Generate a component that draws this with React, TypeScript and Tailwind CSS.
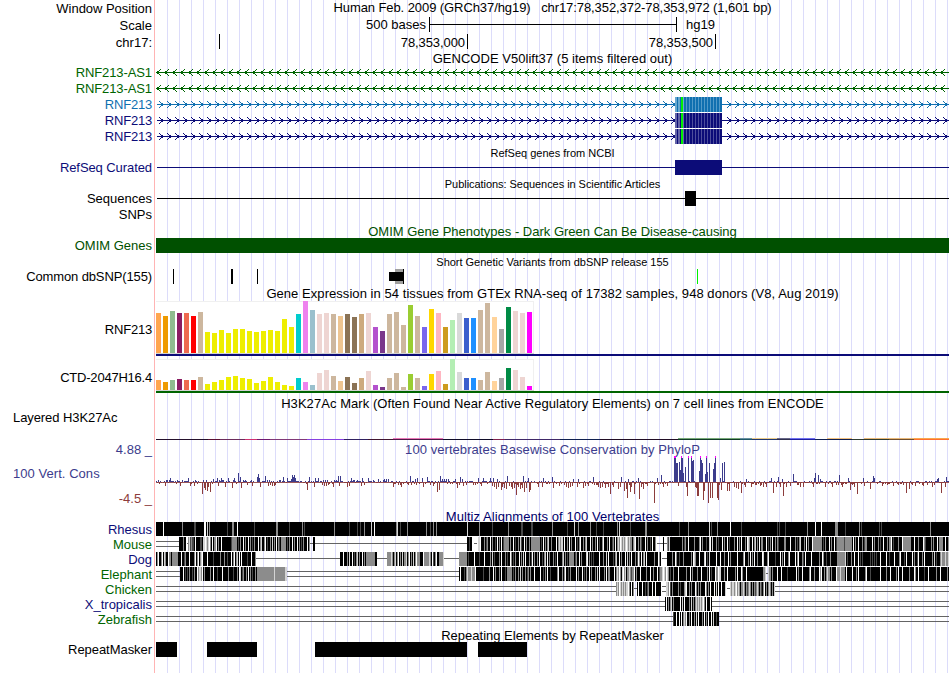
import type { ReactNode } from 'react';

// Genome x coordinates are in image pixels, the data column starts at ORIGIN
const ORIGIN = 156;
const END = 949;
const WIDTH = END - ORIGIN;

const NAVY = '#0c0c78';
const GREEN = '#006400';
const BLUE = '#1070b0';

function Row({ label, height, labelClass = '', children }: {
  label?: ReactNode;
  height: string;
  labelClass?: string;
  children?: ReactNode;
}) {
  return (
    <div className={`flex ${height}`}>
      <div className={`w-[155px] shrink-0 border-r border-[#ffb4b4] pr-[2px] text-right whitespace-nowrap leading-4 ${labelClass}`}>
        {label}
      </div>
      <div className="ml-px w-[793px] shrink-0 bg-[repeating-linear-gradient(90deg,transparent_0_11px,#dcdcfa_11px_12px)]">
        {children}
      </div>
    </div>
  );
}

function Title({ children, className = '' }: { children: ReactNode; className?: string }) {
  return <div className={`text-center whitespace-pre ${className}`}>{children}</div>;
}

function Plot({ height, children }: { height: number; children: ReactNode }) {
  return (
    <svg
      className="block overflow-visible"
      width={WIDTH}
      height={height}
      viewBox={`${ORIGIN} 0 ${WIDTH} ${height}`}
      shapeRendering="crispEdges"
    >
      {children}
    </svg>
  );
}

/* ---------- genes ---------- */

function arrows(dir: 'left' | 'right', skip?: [number, number]) {
  let d = '';
  const first = dir === 'left' ? 157 : 162;
  const step = dir === 'left' ? 1 : -1;
  for (let tip = first; tip < END; tip += 8) {
    if (skip && tip > skip[0] && tip < skip[1] + 3) continue;
    for (let i = 1; i <= 3; i++) {
      const x = tip + i * step;
      if (x >= END) continue;
      d += `M${x} ${7 - i}h1v1h-1zM${x} ${7 + i}h1v1h-1z`;
    }
    // solid point where the arms meet the line
    d += `M${tip} 6h1v3h-1z`;
  }
  return d;
}

function Intron({ color }: { color: string }) {
  return (
    <Plot height={15}>
      <rect x={156} y={7} width={793} height={1} fill={color} />
      <path d={arrows('left')} fill={color} />
    </Plot>
  );
}

function Gene({ color, light }: { color: string; light: string }) {
  const codons = [];
  for (let x = 686; x < 722; x += 3) codons.push(x);
  return (
    <Plot height={15}>
      <rect x={157} y={7} width={792} height={1} fill={color} />
      <path d={arrows('right', [674, 722])} fill={color} />
      <rect x={675} y={0} width={47} height={15} fill={color} />
      <rect x={675} y={0} width={2} height={15} fill={light} />
      <rect x={678} y={0} width={2} height={15} fill={light} />
      <rect x={681} y={0} width={2} height={15} fill="#00f000" />
      <rect x={683} y={0} width={1} height={15} fill={light} />
      {codons.map(x => <rect key={x} x={x} y={0} width={1} height={15} fill={light} opacity={0.75} />)}
    </Plot>
  );
}

/* ---------- GTEx ---------- */

const TISSUES = [
  '#ffa54f', '#ee9a00', '#8fbc8f', '#8b1c62', '#ee6a50', '#ff0000', '#cdb79e',
  '#eeee00', '#eeee00', '#eeee00', '#eeee00', '#eeee00', '#eeee00', '#eeee00',
  '#eeee00', '#eeee00', '#eeee00', '#eeee00', '#eeee00', '#eeee00',
  '#00cdcd', '#ee82ee', '#9ac0cd', '#eed5d2', '#eed5d2', '#cdb79e', '#eec591',
  '#8b7355', '#8b7355', '#cdaa7d', '#eed5d2', '#b452cd', '#7a378b',
  '#cdb79e', '#cdb79e', '#cdb79e', '#9acd32', '#cdb79e', '#7a67ee', '#ffd700',
  '#ffb6c1', '#cd9b1d', '#b4eeb4', '#d9d9d9', '#3a5fcd', '#1e90ff',
  '#cdb79e', '#cdb79e', '#ffd39b', '#a6a6a6', '#008b45', '#eed5d2', '#eed5d2', '#ff00ff',
];

const RNF213 = [
  40, 37, 42, 40, 40, 37, 41, 21, 20, 23, 20, 24, 24, 22, 21, 22, 23, 22, 34, 26, 39, 52, 43, 39, 40, 39, 37,
  39, 36, 39, 40, 26, 22, 39, 41, 28, 48, 37, 26, 44, 40, 26, 33, 40, 35, 35, 43, 50, 36, 24, 46, 42, 40, 41,
];

const CTD2047 = [
  10, 8, 10, 11, 10, 10, 13, 6, 8, 10, 13, 14, 12, 11, 7, 9, 13, 8, 5, 4, 12, 8, 5, 17, 20, 14, 9,
  13, 7, 12, 19, 5, 3, 12, 17, 3, 16, 12, 4, 16, 19, 6, 31, 18, 12, 12, 10, 18, 9, 12, 22, 20, 13, 4,
];

function Expression({ values, max, line }: { values: number[]; max: number; line: string }) {
  return (
    <Plot height={max + 3}>
      <rect x={156} y={0} width={378} height={max + 1} fill="#f0f0f0" />
      <rect x={156} y={1} width={377} height={max - 1} fill="#ffffff" />
      <rect x={156} y={max} width={378} height={1} fill="#d3d3d3" />
      {values.map((v, i) => (
        <rect key={i} x={156 + i * 7} y={max - v} width={5} height={v} fill={TISSUES[i]} />
      ))}
      <rect x={156} y={max + 1} width={793} height={2} fill={line} />
    </Plot>
  );
}

/* ---------- H3K27Ac ---------- */

const H3K27AC: [number, number, string][] = [
  [156, 208, '#24102c'], [208, 220, '#5a1034'], [220, 245, '#6c2c5c'], [245, 257, '#d03070'],
  [257, 270, '#701870'], [270, 307, '#803878'], [307, 344, '#8840e0'], [344, 368, '#302060'],
  [368, 393, '#401430'], [393, 443, '#501848'], [443, 493, '#100c28'], [493, 505, '#802050'],
  [505, 560, '#402868'], [560, 600, '#102050'], [600, 678, '#200c24'], [678, 740, '#103c28'],
  [740, 752, '#205868'], [752, 777, '#203870'], [777, 790, '#303050'], [790, 815, '#2020a0'],
  [815, 852, '#102050'], [852, 889, '#303c30'], [889, 914, '#705030'], [914, 949, '#ff7030'],
];

const H3K27AC_TOP: [number, number, string][] = [
  [393, 443, '#e878b8'], [678, 740, '#78a878'], [740, 752, '#6890a0'], [752, 777, '#e8c888'],
  [777, 790, '#686888'], [790, 815, '#7070f0'], [827, 852, '#f0c080'], [864, 914, '#e8b878'], [914, 949, '#f8a850'],
];

/* ---------- PhyloP ---------- */

const UP: [number, number][] = [
  [170, 4], [188, 4], [213, 3], [217, 4], [221, 4], [228, 4], [234, 4], [238, 9], [240, 5], [243, 2], [257, 5],
  [258, 8], [259, 4], [265, 6], [283, 5], [287, 4], [291, 3], [292, 7], [293, 5], [294, 7], [295, 4], [309, 5],
  [315, 4], [318, 4], [338, 6], [340, 6], [351, 4], [362, 4], [368, 4], [378, 3], [384, 3], [386, 3], [388, 3],
  [410, 6], [415, 3], [417, 4], [422, 4], [427, 5], [440, 6], [442, 3], [444, 3], [446, 3], [448, 3], [455, 3],
  [460, 5], [462, 3], [478, 4], [483, 4], [490, 4], [493, 4], [497, 3], [507, 6], [523, 6], [528, 4], [543, 4],
  [552, 5], [573, 3], [578, 3], [593, 5], [621, 5], [628, 3], [638, 4], [657, 4], [661, 7], [674, 26], [675, 26],
  [676, 19], [677, 19], [679, 20], [680, 12], [681, 26], [682, 24], [683, 9], [685, 15], [688, 26], [691, 26],
  [692, 21], [693, 22], [699, 11], [700, 26], [701, 22], [702, 19], [705, 8], [706, 26], [707, 10], [709, 19],
  [713, 13], [714, 19], [715, 26], [720, 4], [722, 19], [724, 20], [746, 3], [771, 4], [778, 5], [782, 3],
  [793, 8], [814, 4], [815, 9], [818, 7], [820, 3], [839, 7], [848, 4], [863, 4], [873, 6], [874, 4], [937, 3],
  [938, 4], [946, 5],
];

const DOWN: [number, number][] = [
  [159, 2], [165, 4], [180, 4], [190, 4], [194, 4], [202, 12], [204, 6], [205, 8], [207, 9], [208, 5], [210, 10],
  [218, 4], [225, 5], [232, 6], [241, 6], [247, 3], [252, 4], [260, 5], [268, 4], [270, 3], [272, 4], [274, 4],
  [275, 3], [307, 8], [314, 5], [322, 3], [324, 4], [326, 4], [328, 3], [333, 5], [339, 4], [347, 5], [349, 4],
  [361, 4], [364, 3], [393, 5], [398, 3], [401, 5], [423, 5], [430, 3], [433, 4], [437, 10], [439, 8], [444, 4],
  [457, 6], [463, 4], [473, 3], [481, 4], [492, 4], [494, 5], [496, 7], [498, 5], [501, 8], [502, 5], [504, 6],
  [506, 7], [509, 4], [511, 5], [512, 7], [514, 6], [516, 13], [518, 5], [520, 7], [522, 6], [524, 10], [526, 6],
  [529, 10], [530, 8], [538, 5], [542, 5], [553, 6], [559, 4], [566, 5], [568, 6], [570, 5], [572, 4], [577, 5],
  [583, 6], [585, 4], [588, 4], [598, 5], [600, 6], [602, 5], [605, 6], [608, 5], [610, 12], [613, 5], [618, 7],
  [620, 5], [624, 9], [626, 7], [627, 16], [630, 10], [631, 5], [634, 12], [639, 17], [641, 5], [643, 7],
  [647, 4], [654, 21], [663, 5], [667, 4], [678, 4], [686, 5], [687, 14], [695, 5], [696, 6], [697, 14],
  [698, 14], [703, 18], [704, 9], [708, 21], [710, 16], [712, 16], [717, 16], [718, 18], [721, 8], [727, 9],
  [729, 9], [734, 5], [736, 6], [738, 7], [741, 11], [745, 5], [751, 5], [760, 4], [763, 5], [766, 5], [773, 11],
  [776, 5], [780, 5], [783, 14], [786, 5], [790, 4], [800, 5], [803, 5], [813, 5], [825, 5], [832, 5], [842, 5],
  [850, 8], [854, 5], [857, 12], [864, 4], [870, 7], [882, 4], [893, 4], [906, 11], [909, 7], [915, 4], [923, 4],
  [932, 5], [941, 11], [945, 5],
];

// low-amplitude scores between the named peaks
function background(x: number) {
  const n = Math.abs(Math.sin(x * 12.9898) * 43758.5453) % 1;
  if (x < 400) return n < 0.4 ? 1 : n < 0.6 ? -1 : n < 0.75 ? 2 : n < 0.82 ? -2 : 0;
  return n < 0.34 ? 1 : n < 0.6 ? -1 : n < 0.8 ? -2 : n < 0.9 ? -3 : 0;
}

function Conservation() {
  const scores = new Map<number, number>();
  for (let x = ORIGIN; x < END; x++) scores.set(x, background(x));
  DOWN.forEach(([x, v]) => scores.set(x, -v));
  UP.forEach(([x, v]) => scores.set(x, v));

  let up = '';
  let down = '';
  scores.forEach((v, x) => {
    if (v > 0) up += `M${x} ${24 - v}h1v${v}h-1z`;
    if (v < 0) down += `M${x} 24h1v${-v}h-1z`;
  });
  return (
    <Plot height={50}>
      <rect x={156} y={24} width={793} height={1} fill="#8c3c3c" opacity={0.85} />
      <path d={up} fill="#3c3c8c" />
      <path d={down} fill="#8c3c3c" />
      {UP.filter(([, v]) => v === 26).map(([x]) => (
        <rect key={x} x={x} y={-2} width={x === 674 ? 2 : 1} height={2} fill="#ff00ff" />
      ))}
    </Plot>
  );
}

/* ---------- Multiz ---------- */

const SHADES: Record<string, string> = {
  k: '#000000', d: '#484848', g: '#8c8c8c', s: '#d4d4d4', w: '#ffffff',
};

// start, end, run-length shades (letter, then an optional pixel count)
type Block = [number, number, string];

type Species = {
  name: string;
  color: string;
  double?: [number, number][];
  single?: [number, number][];
  blocks: Block[];
};

const RHESUS_MARKS: [number, string][] = [
  [163, 'w'], [182, 'g'], [194, 'd2'], [204, 'w2'], [207, 's'], [209, 'g'], [227, 'd'], [232, 'g2'], [237, 'w'],
  [254, 'd'], [276, 'g2'], [289, 'd'], [302, 'g'], [304, 'd'], [334, 'g'], [349, 'd'], [357, 'd'], [360, 'd'],
  [364, 'g'], [371, 's'], [374, 'w'], [396, 'gs'], [400, 'd'], [407, 'g'], [426, 'g'], [430, 'd'], [433, 'g'],
  [436, 'g'], [467, 's'], [479, 'g'], [492, 'd'], [508, 'g'], [521, 'd2'], [531, 'd2'], [552, 'g'], [567, 'd'],
  [574, 's'], [578, 'g'], [590, 'g'], [596, 'd'], [603, 'd'], [617, 'g'], [619, 's'], [630, 'd'], [645, 'g2'],
  [679, 'd'], [688, 'g'], [709, 's'], [711, 'd'], [717, 'g'], [730, 'w'], [741, 'd'], [777, 'd'], [779, 'd'],
  [785, 'd'], [807, 'g'], [815, 'w'], [821, 'w'], [835, 'g3'], [845, 'd'], [859, 'g'], [861, 'd'], [879, 'd'],
  [881, 'd'], [930, 'g'],
];

function marks([x, pattern]: [number, string]): Block {
  return [x, x + (pattern === 'gs' ? 2 : Number(pattern.slice(1) || 1)), pattern];
}

const SPECIES: Species[] = [
  { name: 'Rhesus', color: '#0c0c78', blocks: [[156, 949, 'k793'], ...RHESUS_MARKS.map(marks)] },
  {
    name: 'Mouse',
    color: '#006400',
    double: [[156, 179]],
    single: [[187, 188], [310, 313], [315, 467], [474, 477], [657, 667]],
    blocks: [
      [179, 187, 'k4gk2w'],
      [188, 232, 'gsdgd2kwk4d2ks2wsgswgkwkg2wkgk2wk9dkgkg2'],
      [232, 310, 'g5kdkgk2wkgk2wkgkdkgk3wkgsk2gwkdk2gkskgkwkgdk'],
      [313, 315, 'k2'],
      [467, 474, 'k2dk2w2'],
      [477, 504, 'ws2wk3gkdgk2wkgk2dkwkgkwkdg'],
      [504, 530, 'g5kgk2wkdk2gksdk2wkgk2g'],
      [530, 541, 'kg9k'],
      [541, 617, 'dkwkgkgsk2gk4wkgsgs2kwk2gkwkgk3wkdkgwk2gkgsk3wkgk2gkwkdk2gwk3gkwk2dgkwk2'],
      [617, 632, 'gsgwsgsgswsgsg'],
      [632, 657, 'kgswk2gkgdk3wkgk2dkwk2gwk'],
      [663, 664, 'k'],
      [667, 682, 'gdsk12'],
      [682, 813, 'gkdgk2wk5gk4gwkgk3dk2swksk3gkdk3wkgk2wkdk4gk2wkgkwk3gkwsgk2wkgskgkwkg2k3wkdkgkwk2gkgdk5g2k4wk4gkdkgsk3gkwkgk3wkdk'],
      [813, 822, 'g9'],
      [822, 837, 'kdkgk3wkgk2wkd'],
      [837, 852, 'g7dg7'],
      [852, 903, 'kwkgk2wk3gkdg2k5wkgk3gkdk2wk3gkg2wkdk4gk2'],
      [903, 911, 'g8'],
      [911, 949, 'k3wk3gk4wgdk5gkgk3wkg4k2wk2g'],
    ],
  },
  {
    name: 'Dog',
    color: '#0c0c78',
    single: [[256, 340], [377, 387], [444, 459], [662, 667]],
    blocks: [
      [156, 256, 'kgwk2gwksgk2wg2kg6k3wk2dgk3wk4gwkgwkgswk4wk5dk6gk3gk2dk3wkgwkgskwkwk5dk3wk2'],
      [340, 377, 'k3wk3gksk2wkdkgskgk2wkgkg9'],
      [387, 444, 'g4sgkgskgwkgkskg2skgwkgkskgwg3k3wg5sgkwdkgwk2'],
      [459, 662, 'g8kdk5wk4dk4wk5gkskdk4gkwk3gkdk2wgkdkgk3wkgkskwk3gkdwkgk2gkwk2dkgskwkgk3gkdkwk4gskgkdkg5kdgk2wkgk4swkgkdkdk5wk3gk2skwk4dkgsk2wkgk3wkskgkwk3gkdwgkwkgskwk7gk3wgkwkdk7wk4gs'],
      [667, 837, 'k5gk2wgk2dk3gk7gkwsgk3wk4swkdksk6wk3wk3gk3wkgk6wk5gwk3gkwkgkwk2gk4wsk3gwk6dk4wkgkwk3gwk5wkgwk3gdkwk5wkk'],
      [837, 845, 'g8'],
      [845, 941, 'skdk3gk2wk3wkdkdk7dkdkdkdk3wk5wk2dk4wk4gwk3dkwk5wkgk2dwk3gkwk7gk'],
      [941, 949, 'sg3sg2s'],
    ],
  },
  {
    name: 'Elephant',
    color: '#006400',
    double: [[156, 180], [287, 459]],
    single: [[766, 768]],
    blocks: [
      [180, 257, 'k3wkdkdkgk2dkgk2wgs2gwkgk5gk2wk3dk4wk5gk4dk3gkwskdgk2gkwkgkdk2gkd'],
      [257, 274, 'g17'],
      [274, 287, 'sg10s2'],
      [459, 573, 'kwk3dkgsg2gsg3wk7dk5gk3wkgk3gkwk3dkg4gkdkgk2gkskgk2gkdgkgk3wk5wk2dkgkwk2dk6gwk3gkgwk2dkgk3wk2g2kgk2wk3gkdk'],
      [573, 617, 'k3wkgk3wkdkgk2wkgk3gkskwk4gkwkg2k'],
      [617, 633, 'sgwgkswgskg2sgdgs'],
      [633, 661, 'gwkgk3wk5gk3wk2gk3wkd'],
      [661, 669, 'gswsgwsg'],
      [669, 747, 'kdk2gk4wk7gk3wkgk4gk3wk5gkwkdk3wg2ws2k3gk2wk7gkwk3wgk3wkgk2sgwgk'],
      [747, 763, 'k16'],
      [763, 766, 'g2s'],
      [768, 837, 'sg2kgk4wk3wk5dk8wkgk3wk6gwk3gk4wgwk2gkg'],
      [837, 845, 'g3sg4'],
      [845, 949, 'kwk5wk3gkwk6gwk3dk9wk5gk3wk5gkwk3wk6gk4wgk2wk5dk3wk7gk3wk6gk'],
    ],
  },
  {
    name: 'Chicken',
    color: '#006400',
    double: [[156, 616], [662, 666], [775, 949]],
    single: [[634, 637], [727, 730]],
    blocks: [
      [616, 634, 'gsgwsgsgsgs2wgkwk'],
      [637, 661, 'kwk3wk2dkdgk3wk2wk5'],
      [666, 726, 's2gwdkgk5gkdk3gswk2gkgk3wgkgkgk4wgkgkwk3wkskwk2wk3'],
      [730, 775, 'sgs2gswgsgkg2sgkgdgsgkgkgdgsgkgdkgwkgkgsgkgk'],
    ],
  },
  {
    name: 'X_tropicalis',
    color: '#0c0c78',
    double: [[156, 665], [712, 949]],
    blocks: [[665, 712, 'kwkgkgskgk6wkskwk4gkskgkgsgsgsgswgkwk3wk4']],
  },
  {
    name: 'Zebrafish',
    color: '#006400',
    double: [[156, 673], [719, 949]],
    blocks: [[673, 719, 'dk2wk2wkwkgsgwk2gkwk2gkskwk3gkwkgkwk2wkskk']],
  },
];

// expands a block, repeating its pattern up to the block's end
function runs([start, end, pattern]: Block) {
  const tokens = [...pattern.matchAll(/([kdgsw])(\d*)/g)];
  const out: { x: number; width: number; fill: string }[] = [];
  let x = start;
  for (let i = 0; x < end; i = (i + 1) % tokens.length) {
    const [, shade, count] = tokens[i];
    const width = Math.min(Number(count || 1), end - x);
    out.push({ x, width, fill: SHADES[shade] });
    x += width;
  }
  return out;
}

function Alignment({ species }: { species: Species }) {
  return (
    <Plot height={14}>
      {species.double?.map(([a, b]) => (
        <path key={a} d={`M${a} 4h${b - a}v1h${a - b}zM${a} 9h${b - a}v1h${a - b}z`} fill="#646464" />
      ))}
      {species.single?.map(([a, b]) => (
        <rect key={a} x={a} y={6} width={b - a} height={1} fill="#646464" />
      ))}
      {species.blocks.flatMap(runs).map((r, i) => (
        <rect key={i} x={r.x} y={0} width={r.width} height={14} fill={r.fill} />
      ))}
    </Plot>
  );
}

export default function App() {
  return (
    <div className="h-[673px] w-[950px] overflow-hidden bg-white font-['Liberation_Sans',Arial,sans-serif] text-[13px] text-black">
      <Row height="h-[17px]" label="Window Position" labelClass="pt-px tracking-[-0.03px]">
        <Title className="leading-4 tracking-[-0.08px]">{'Human Feb. 2009 (GRCh37/hg19)   chr17:78,352,372-78,353,972 (1,601 bp)'}</Title>
      </Row>
      <Row height="h-[17px]" label="Scale" labelClass="pt-px">
        <Plot height={17}>
          <text x={426} y={12} textAnchor="end">500 bases</text>
          <path d="M429 0h1v7h246v-7h1v15h-1v-7h-246v7h-1z" fill="#000" />
          <text x={686} y={12}>hg19</text>
        </Plot>
      </Row>
      <Row height="h-[16px]" label="chr17:" labelClass="pt-px">
        <Plot height={16}>
          <rect x={219} y={0} width={1} height={15} />
          <text x={465} y={13} textAnchor="end" className="tracking-[-0.08px]">78,353,000</text>
          <rect x={467} y={0} width={1} height={15} />
          <text x={713} y={13} textAnchor="end" className="tracking-[-0.08px]">78,353,500</text>
          <rect x={715} y={0} width={1} height={15} />
        </Plot>
      </Row>
      <Row height="h-[15px]">
        <Title className="leading-[18px] tracking-[0.03px]">GENCODE V50lift37 (5 items filtered out)</Title>
      </Row>

      <Row height="h-[16px]" label="RNF213-AS1" labelClass="tracking-[-0.1px] text-[#006400]">
        <Intron color={GREEN} />
      </Row>
      <Row height="h-[16px]" label="RNF213-AS1" labelClass="tracking-[-0.1px] text-[#006400]">
        <Intron color={GREEN} />
      </Row>
      <Row height="h-[16px]" label="RNF213" labelClass="tracking-[-0.2px] text-[#1070b0]">
        <Gene color={BLUE} light="#68a8d0" />
      </Row>
      <Row height="h-[16px]" label="RNF213" labelClass="tracking-[-0.2px] text-[#0c0c78]">
        <Gene color={NAVY} light="#6464a8" />
      </Row>
      <Row height="h-[16px]" label="RNF213" labelClass="tracking-[-0.2px] text-[#0c0c78]">
        <Gene color={NAVY} light="#6464a8" />
      </Row>

      <Row height="h-[15px]">
        <Title className="text-[11px] leading-4">RefSeq genes from NCBI</Title>
      </Row>
      <Row height="h-[16px]" label="RefSeq Curated" labelClass="tracking-[-0.08px] text-[#0c0c78]">
        <Plot height={15}>
          <rect x={157} y={7} width={792} height={1} fill={NAVY} />
          <rect x={675} y={0} width={47} height={15} fill={NAVY} />
        </Plot>
      </Row>
      <Row height="h-[15px]">
        <Title className="text-[11px] leading-4 tracking-[-0.05px]">Publications: Sequences in Scientific Articles</Title>
      </Row>
      <Row height="h-[16px]" label="Sequences">
        <Plot height={15}>
          <rect x={157} y={7} width={792} height={1} />
          <rect x={685} y={0} width={11} height={15} />
        </Plot>
      </Row>
      <Row height="h-[16px]" label="SNPs" />
      <Row height="h-[15px]">
        <Title className="leading-[18px] text-[#005000]">OMIM Gene Phenotypes - Dark Green Can Be Disease-causing</Title>
      </Row>
      <Row height="h-[16px]" label="OMIM Genes" labelClass="text-[#005000]">
        <div className="h-[15px] bg-[#005000]" />
      </Row>
      <Row height="h-[15px]">
        <Title className="text-[11px] leading-4 tracking-[-0.02px]">Short Genetic Variants from dbSNP release 155</Title>
      </Row>
      <Row height="h-[16px]" label="Common dbSNP(155)" labelClass="tracking-[-0.12px]">
        <Plot height={15}>
          <rect x={173} y={0} width={1} height={15} />
          <rect x={231} y={0} width={2} height={15} />
          <rect x={257} y={0} width={1} height={15} />
          <rect x={395} y={0} width={8} height={15} fill="#a0a0a0" />
          <rect x={389} y={3} width={14} height={9} />
          <rect x={403} y={0} width={1} height={15} />
          <rect x={697} y={0} width={1} height={15} fill="#00f000" />
        </Plot>
      </Row>

      <Row height="h-[16px]">
        <Title className="leading-[18px] tracking-[0.055px]">Gene Expression in 54 tissues from GTEx RNA-seq of 17382 samples, 948 donors (V8, Aug 2019)</Title>
      </Row>
      <Row height="h-[58px]" label="RNF213" labelClass="pt-[21px] tracking-[-0.2px]">
        <Expression values={RNF213} max={52} line={NAVY} />
      </Row>
      <Row height="h-[37px]" label="CTD-2047H16.4" labelClass="pt-[11px] tracking-[-0.22px]">
        <Expression values={CTD2047} max={31} line={GREEN} />
      </Row>

      <Row height="h-[16px]">
        <Title className="leading-4 tracking-[0.06px]">H3K27Ac Mark (Often Found Near Active Regulatory Elements) on 7 cell lines from ENCODE</Title>
      </Row>
      <Row height="h-[30px]" label={<div className="-mt-[2px] pl-[13px] text-left">Layered H3K27Ac</div>} labelClass="tracking-[-0.08px]">
        <Plot height={30}>
          {H3K27AC.map(([a, b, fill]) => <rect key={a} x={a} y={27} width={b - a} height={1} fill={fill} />)}
          {H3K27AC_TOP.map(([a, b, fill]) => <rect key={a} x={a} y={26} width={b - a} height={1} fill={fill} />)}
        </Plot>
      </Row>
      <Row height="h-[16px]" label="4.88 _" labelClass="text-[#3c3c8c]">
        <Title className="leading-4 tracking-[0.06px] text-[#3c3c8c]">100 vertebrates Basewise Conservation by PhyloP</Title>
      </Row>
      <Row
        height="h-[50px]"
        labelClass="flex flex-col pt-[8px]"
        label={
          <>
            <div className="pl-[13px] text-left tracking-[0.05px] text-[#3c3c8c]">100 Vert. Cons</div>
            <div className="mt-[9px] text-[#8c3c3c]">-4.5 _</div>
          </>
        }
      >
        <Conservation />
      </Row>

      <Row height="h-[14px]">
        <Title className="leading-[18px] tracking-[0.07px] text-[#00006b]">Multiz Alignments of 100 Vertebrates</Title>
      </Row>
      {SPECIES.map(s => (
        <Row key={s.name} height="h-[15px]" label={<span style={{ color: s.color }}>{s.name}</span>}>
          <Alignment species={s} />
        </Row>
      ))}

      <Row height="h-[15px]">
        <Title className="leading-[18px]">Repeating Elements by RepeatMasker</Title>
      </Row>
      <Row height="h-[31px]" label="RepeatMasker" labelClass="tracking-[-0.05px]">
        <Plot height={15}>
          <rect x={156} y={0} width={21} height={15} />
          <rect x={207} y={0} width={50} height={15} />
          <rect x={315} y={0} width={152} height={15} />
          <rect x={478} y={0} width={49} height={15} />
        </Plot>
      </Row>
    </div>
  );
}
